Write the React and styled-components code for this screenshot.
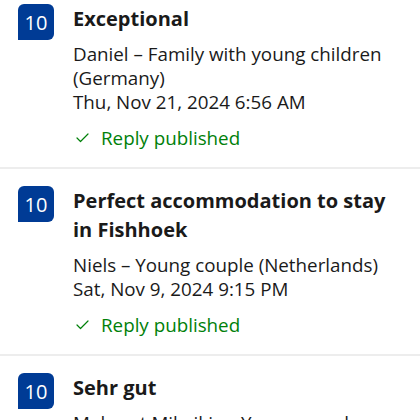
import styled, { createGlobalStyle } from "styled-components";

const GlobalStyle = createGlobalStyle`
  html, body {
    margin: 0;
    padding: 0;
    background: #ffffff;
  }
  body {
    font-family: "Open Sans", "Noto Sans", Arial, sans-serif;
    color: #1a1a1a;
  }
`;

const List = styled.div`
  width: 420px;
  overflow: hidden;
`;

const Item = styled.div`
  display: flex;
  align-items: flex-start;
  gap: 19px;
  padding: 17px 18px 17px 18px;
  border-bottom: 2px solid #ededed;
  &:first-child {
    padding-top: 4px;
  }
`;

const Badge = styled.div`
  flex: 0 0 36px;
  width: 36px;
  height: 36px;
  display: flex;
  align-items: center;
  justify-content: center;
  background: #003b95;
  color: #ffffff;
  font-size: 20px;
  border-radius: 6px 6px 6px 0;
`;

const Body = styled.div`
  display: flex;
  flex-direction: column;
  min-width: 0;
`;

const Title = styled.div`
  font-size: 20px;
  font-weight: 700;
  line-height: 29px;
  color: #1a1a1a;
`;

const Meta = styled.div`
  margin-top: 9px;
  font-size: 18.8px;
  line-height: 24px;
  color: #1a1a1a;
`;

const Reply = styled.div`
  display: flex;
  align-items: center;
  gap: 12px;
  margin-top: 12px;
  padding-left: 3px;
  font-size: 18.8px;
  line-height: 24px;
  color: #008009;
`;

const Check = () => (
  <svg width="13" height="10" viewBox="0 0 13 10" fill="none">
    <polyline
      points="1,5 4.5,8.5 12,1"
      stroke="#008009"
      strokeWidth="1.2"
      strokeLinecap="round"
      strokeLinejoin="round"
    />
  </svg>
);

const reviews = [
  {
    title: "Exceptional",
    meta: ["Daniel – Family with young children", "(Germany)", "Thu, Nov 21, 2024 6:56 AM"],
    replied: true,
  },
  {
    title: "Perfect accommodation to stay in Fishhoek",
    meta: ["Niels – Young couple (Netherlands)", "Sat, Nov 9, 2024 9:15 PM"],
    replied: true,
  },
  {
    title: "Sehr gut",
    meta: ["Mehmet Mihcikiz – Young couple", "(Germany)", "Mon, Nov 4, 2024 3:10 PM"],
    replied: true,
  },
];

const App = () => (
  <>
    <GlobalStyle />
    <List>
      {reviews.map((r, i) => (
        <Item key={i}>
          <Badge>10</Badge>
          <Body>
            <Title>{r.title}</Title>
            <Meta>
              {r.meta.map((line, j) => (
                <div key={j}>{line}</div>
              ))}
            </Meta>
            {r.replied && (
              <Reply>
                <Check />
                Reply published
              </Reply>
            )}
          </Body>
        </Item>
      ))}
    </List>
  </>
);

export default App;
